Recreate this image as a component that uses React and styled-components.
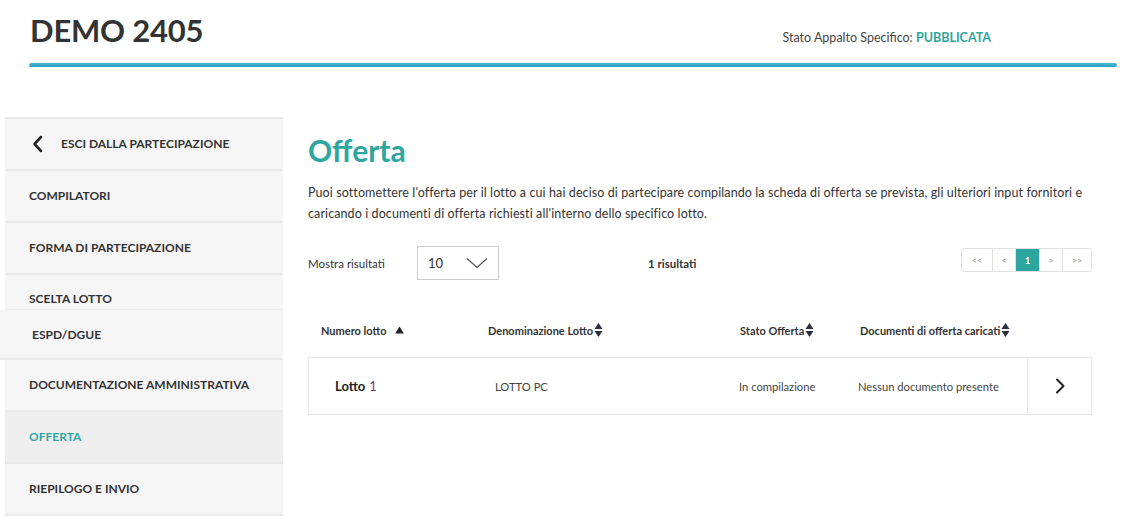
import React from "react";
import styled, { createGlobalStyle } from "styled-components";

const Global = createGlobalStyle`
  html, body { margin: 0; padding: 0; background: #fff; }
  body { font-family: Lato, "Open Sans", sans-serif; color: #333; }
  * { box-sizing: border-box; }
`;

const TEAL = "#2ea6a0";

const Page = styled.div`
  width: 1140px;
  height: 520px;
  overflow: hidden;
  background: #fff;
`;

const Header = styled.header`
  padding: 10px 23px 0 29px;
`;

const TitleRow = styled.div`
  display: flex;
  justify-content: space-between;
  align-items: flex-end;
  height: 53px;
`;

const Title = styled.h1`
  margin: 1px 0 0 1px;
  font-size: 31px;
  line-height: 38px;
  font-weight: 700;
  color: #333;
  letter-spacing: -0.2px;
  align-self: flex-start;
`;

const Status = styled.div`
  font-size: 12.5px;
  color: #444;
  margin: 0 126px 18px 0;
  span { color: ${TEAL}; font-weight: 700; }
`;

const Rule = styled.div`
  height: 4px;
  border-radius: 2px;
  background: linear-gradient(#4cb8d6, #2d9bb8);
`;

const Body = styled.div`
  display: flex;
  margin-top: 50px;
`;

const Sidebar = styled.nav`
  width: 278px;
  margin-left: 5px;
  border-top: 2px solid #eaeaea;
  display: flex;
  flex-direction: column;
`;

const NavItem = styled.div`
  display: flex;
  align-items: ${(p) => (p.$compact ? "flex-start" : "center")};
  gap: 16px;
  height: ${(p) => (p.$compact ? "35px" : p.$ghost ? "50px" : "52px")};
  padding: ${(p) => (p.$compact ? "16px 0 0 24px" : p.$ghost ? "1px 0 0 32px" : "0 0 0 24px")};
  margin-left: ${(p) => (p.$ghost ? "-5px" : "0")};
  background: ${(p) => (p.$active ? "#eeeeee" : "#f5f5f5")};
  border-bottom: ${(p) => (p.$compact ? "1px solid #ececec" : "2px solid #eaeaea")};
  font-size: 12px;
  font-weight: 700;
  text-transform: uppercase;
  color: ${(p) => (p.$active ? TEAL : "#333")};
  line-height: 16px;
`;

const BackIcon = () => (
  <svg width="14" height="18" viewBox="0 0 14 18" style={{ marginLeft: 2 }}>
    <path d="M10 2 L3.5 9 L10 16" fill="none" stroke="#222" strokeWidth="2.6" strokeLinecap="round" strokeLinejoin="round" />
  </svg>
);

const Main = styled.main`
  margin-left: 25px;
  width: 784px;
`;

const Heading = styled.h2`
  margin: 15px 0 0;
  font-size: 30px;
  line-height: 36px;
  font-weight: 700;
  color: ${TEAL};
`;

const Intro = styled.p`
  margin: 14px 0 0;
  font-size: 12.5px;
  line-height: 21px;
  letter-spacing: 0.1px;
  color: #333;
  max-width: 784px;
`;

const Controls = styled.div`
  display: flex;
  align-items: center;
  margin-top: 22px;
  height: 34px;
`;

const Label = styled.div`
  width: 109px;
  font-size: 11.5px;
  color: #333;
`;

const Select = styled.div`
  width: 82px;
  height: 34px;
  border: 1px solid #ccc;
  display: flex;
  align-items: center;
  justify-content: space-between;
  padding: 0 10px 0 10px;
  font-size: 13px;
  color: #333;
`;

const Count = styled.div`
  margin-left: 149px;
  font-size: 11.5px;
  font-weight: 700;
  color: #333;
`;

const Pager = styled.div`
  margin-left: auto;
  align-self: flex-start;
  margin-top: 2px;
  display: flex;
  height: 24px;
  border: 1px solid #e0e0e0;
  border-radius: 3px;
  overflow: hidden;
`;

const PageBtn = styled.div`
  width: ${(p) => p.$w}px;
  display: flex;
  align-items: center;
  justify-content: center;
  font-size: 9px;
  color: ${(p) => (p.$active ? "#fff" : "#999")};
  background: ${(p) => (p.$active ? TEAL : "#fff")};
  font-weight: ${(p) => (p.$active ? 700 : 400)};
  border-left: ${(p) => (p.$first ? "none" : "1px solid #e0e0e0")};
`;

const COLS = "172px 250px 120px 176px 1fr";

const HeadRow = styled.div`
  display: grid;
  grid-template-columns: ${COLS};
  margin-top: 35px;
  height: 30px;
  align-items: center;
`;

const HeadCell = styled.div`
  padding-left: ${(p) => p.$pad}px;
  display: flex;
  align-items: center;
  gap: ${(p) => p.$gap ?? 1}px;
  font-size: 11px;
  font-weight: 700;
  color: #333;
  white-space: nowrap;
`;

const DataRow = styled.div`
  display: grid;
  grid-template-columns: ${COLS};
  margin-top: 12px;
  height: 58px;
  border: 1px solid #e6e6e6;
  align-items: stretch;
`;

const Cell = styled.div`
  padding-left: ${(p) => p.$pad}px;
  display: flex;
  align-items: center;
  font-size: 11.2px;
  color: #444;
  white-space: nowrap;
`;

const LotName = styled.span`
  font-size: 13px;
  font-weight: 700;
  color: #222;
  margin-right: 4px;
`;

const LotNum = styled.span`
  font-size: 13px;
  color: #6b3a8c;
`;

const ActionCell = styled.div`
  border-left: 1px solid #e6e6e6;
  display: flex;
  align-items: center;
  justify-content: center;
`;

const SortBoth = () => (
  <svg width="9" height="16" viewBox="0 0 9 16">
    <path d="M4.5 1 L8.5 7 L0.5 7 Z" fill="#2b2e3f" />
    <path d="M0.5 9 L8.5 9 L4.5 15 Z" fill="#2b2e3f" />
  </svg>
);

const SortUp = () => (
  <svg width="9" height="8" viewBox="0 0 9 8">
    <path d="M4.5 0.5 L8.8 7.5 L0.2 7.5 Z" fill="#222" />
  </svg>
);

const Chevron = () => (
  <svg width="22" height="12" viewBox="0 0 22 12">
    <path d="M1 1.5 L11 10.5 L21 1.5" fill="none" stroke="#555" strokeWidth="1.3" />
  </svg>
);

const RowArrow = () => (
  <svg width="12" height="16" viewBox="0 0 12 16">
    <path d="M3 1.5 L9.5 8 L3 14.5" fill="none" stroke="#222" strokeWidth="2" strokeLinecap="round" strokeLinejoin="round" />
  </svg>
);

export default function App() {
  return (
    <Page>
      <Global />
      <Header>
        <TitleRow>
          <Title>DEMO 2405</Title>
          <Status>
            Stato Appalto Specifico: <span>PUBBLICATA</span>
          </Status>
        </TitleRow>
        <Rule />
      </Header>
      <Body>
        <Sidebar>
          <NavItem>
            <BackIcon />
            Esci dalla partecipazione
          </NavItem>
          <NavItem>Compilatori</NavItem>
          <NavItem>Forma di partecipazione</NavItem>
          <NavItem $compact>Scelta lotto</NavItem>
          <NavItem $ghost>ESPD/DGUE</NavItem>
          <NavItem>Documentazione amministrativa</NavItem>
          <NavItem $active>Offerta</NavItem>
          <NavItem>Riepilogo e invio</NavItem>
        </Sidebar>
        <Main>
          <Heading>Offerta</Heading>
          <Intro>
            Puoi sottomettere l'offerta per il lotto a cui hai deciso di partecipare compilando la scheda di offerta se prevista, gli ulteriori input fornitori e caricando i documenti di offerta richiesti all'interno dello specifico lotto.
          </Intro>
          <Controls>
            <Label>Mostra risultati</Label>
            <Select>
              <span>10</span>
              <Chevron />
            </Select>
            <Count>1 risultati</Count>
            <Pager>
              <PageBtn $w={30} $first>&lt;&lt;</PageBtn>
              <PageBtn $w={23}>&lt;</PageBtn>
              <PageBtn $w={24} $active>1</PageBtn>
              <PageBtn $w={23}>&gt;</PageBtn>
              <PageBtn $w={29}>&gt;&gt;</PageBtn>
            </Pager>
          </Controls>
          <HeadRow>
            <HeadCell $pad={13} $gap={8}>Numero lotto <SortUp /></HeadCell>
            <HeadCell $pad={8}>Denominazione Lotto<SortBoth /></HeadCell>
            <HeadCell $pad={10}>Stato Offerta<SortBoth /></HeadCell>
            <HeadCell $pad={10}>Documenti di offerta caricati<SortBoth /></HeadCell>
            <div />
          </HeadRow>
          <DataRow>
            <Cell $pad={26}>
              <LotName>Lotto</LotName>
              <LotNum>1</LotNum>
            </Cell>
            <Cell $pad={14}>LOTTO PC</Cell>
            <Cell $pad={8}>In compilazione</Cell>
            <Cell $pad={7}>Nessun documento presente</Cell>
            <ActionCell>
              <RowArrow />
            </ActionCell>
          </DataRow>
        </Main>
      </Body>
    </Page>
  );
}
